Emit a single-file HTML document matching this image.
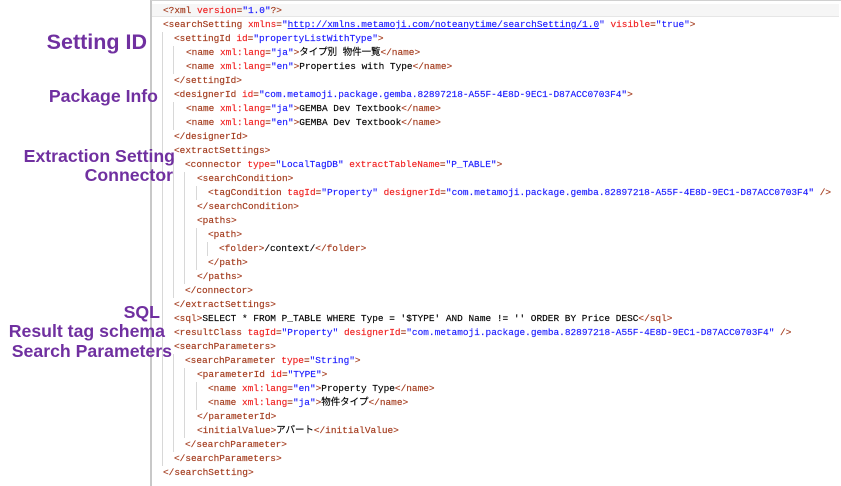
<!DOCTYPE html>
<html><head><meta charset="utf-8"><style>
html,body{margin:0;padding:0;background:#fff;width:841px;height:486px;overflow:hidden;position:relative}
.box{position:absolute;left:150px;top:0;width:689px;height:490px;border-left:2px solid #c8c8c8;border-top:1px solid #d0d0d0;border-right:1px solid #d0d0d0}
.band{position:absolute;left:152px;top:4px;width:687px;height:12px;background:#f6f6f6;border-bottom:1px solid #e6e6e6}
.ln{position:absolute;height:14px;line-height:14px;font-family:"Liberation Mono","Noto Sans CJK JP",monospace;font-size:9.45px;color:#000;white-space:pre;-webkit-text-stroke:0.15px currentColor}
.t{color:#a33a1c}.a{color:#f02020}.v{color:#1a1aff}
.u{color:#1a1aff;text-decoration:underline}
.g{position:absolute;width:1px;background:#d8d8d8}
.lab{position:absolute;font-family:"Liberation Sans",sans-serif;font-weight:bold;font-size:17.7px;color:#7030a0;text-align:right;white-space:nowrap;line-height:19px}
</style></head><body>
<div class="box"></div>
<div class="band"></div>
<div class="g" style="left:162px;top:32px;height:434px"></div>
<div class="g" style="left:173px;top:46px;height:28px"></div>
<div class="g" style="left:173px;top:102px;height:28px"></div>
<div class="g" style="left:173px;top:158px;height:140px"></div>
<div class="g" style="left:184px;top:172px;height:112px"></div>
<div class="g" style="left:196px;top:186px;height:14px"></div>
<div class="g" style="left:196px;top:228px;height:42px"></div>
<div class="g" style="left:207px;top:242px;height:14px"></div>
<div class="g" style="left:173px;top:354px;height:98px"></div>
<div class="g" style="left:184px;top:368px;height:70px"></div>
<div class="g" style="left:196px;top:382px;height:28px"></div>

<div class="ln" style="left:163px;top:4px"><span class="t">&lt;?xml </span><span class="a">version</span><span class="t">=</span><span class="v">"1.0"</span><span class="t">?&gt;</span></div>
<div class="ln" style="left:163px;top:18px"><span class="t">&lt;searchSetting </span><span class="a">xmlns</span><span class="t">=</span><span class="v">"</span><span class="u">http://xmlns.metamoji.com/noteanytime/searchSetting/1.0</span><span class="v">"</span> <span class="a">visible</span><span class="t">=</span><span class="v">"true"</span><span class="t">&gt;</span></div>
<div class="ln" style="left:174px;top:32px"><span class="t">&lt;settingId </span><span class="a">id</span><span class="t">=</span><span class="v">"propertyListWithType"</span><span class="t">&gt;</span></div>
<div class="ln" style="left:186px;top:46px"><span class="t">&lt;name </span><span class="a">xml:lang</span><span class="t">=</span><span class="v">"ja"</span><span class="t">&gt;</span>タイプ別 物件一覧<span class="t">&lt;/name&gt;</span></div>
<div class="ln" style="left:186px;top:60px"><span class="t">&lt;name </span><span class="a">xml:lang</span><span class="t">=</span><span class="v">"en"</span><span class="t">&gt;</span>Properties with Type<span class="t">&lt;/name&gt;</span></div>
<div class="ln" style="left:174px;top:74px"><span class="t">&lt;/settingId&gt;</span></div>
<div class="ln" style="left:174px;top:88px"><span class="t">&lt;designerId </span><span class="a">id</span><span class="t">=</span><span class="v">"com.metamoji.package.gemba.82897218-A55F-4E8D-9EC1-D87ACC0703F4"</span><span class="t">&gt;</span></div>
<div class="ln" style="left:186px;top:102px"><span class="t">&lt;name </span><span class="a">xml:lang</span><span class="t">=</span><span class="v">"ja"</span><span class="t">&gt;</span>GEMBA Dev Textbook<span class="t">&lt;/name&gt;</span></div>
<div class="ln" style="left:186px;top:116px"><span class="t">&lt;name </span><span class="a">xml:lang</span><span class="t">=</span><span class="v">"en"</span><span class="t">&gt;</span>GEMBA Dev Textbook<span class="t">&lt;/name&gt;</span></div>
<div class="ln" style="left:174px;top:130px"><span class="t">&lt;/designerId&gt;</span></div>
<div class="ln" style="left:174px;top:144px"><span class="t">&lt;extractSettings&gt;</span></div>
<div class="ln" style="left:185px;top:158px"><span class="t">&lt;connector </span><span class="a">type</span><span class="t">=</span><span class="v">"LocalTagDB"</span> <span class="a">extractTableName</span><span class="t">=</span><span class="v">"P_TABLE"</span><span class="t">&gt;</span></div>
<div class="ln" style="left:197px;top:172px"><span class="t">&lt;searchCondition&gt;</span></div>
<div class="ln" style="left:208px;top:186px"><span class="t">&lt;tagCondition </span><span class="a">tagId</span><span class="t">=</span><span class="v">"Property"</span> <span class="a">designerId</span><span class="t">=</span><span class="v">"com.metamoji.package.gemba.82897218-A55F-4E8D-9EC1-D87ACC0703F4"</span><span class="t"> /&gt;</span></div>
<div class="ln" style="left:197px;top:200px"><span class="t">&lt;/searchCondition&gt;</span></div>
<div class="ln" style="left:197px;top:214px"><span class="t">&lt;paths&gt;</span></div>
<div class="ln" style="left:208px;top:228px"><span class="t">&lt;path&gt;</span></div>
<div class="ln" style="left:219px;top:242px"><span class="t">&lt;folder&gt;</span>/context/<span class="t">&lt;/folder&gt;</span></div>
<div class="ln" style="left:208px;top:256px"><span class="t">&lt;/path&gt;</span></div>
<div class="ln" style="left:197px;top:270px"><span class="t">&lt;/paths&gt;</span></div>
<div class="ln" style="left:185px;top:284px"><span class="t">&lt;/connector&gt;</span></div>
<div class="ln" style="left:174px;top:298px"><span class="t">&lt;/extractSettings&gt;</span></div>
<div class="ln" style="left:174px;top:312px"><span class="t">&lt;sql&gt;</span>SELECT * FROM P_TABLE WHERE Type = '$TYPE' AND Name != '' ORDER BY Price DESC<span class="t">&lt;/sql&gt;</span></div>
<div class="ln" style="left:174px;top:326px"><span class="t">&lt;resultClass </span><span class="a">tagId</span><span class="t">=</span><span class="v">"Property"</span> <span class="a">designerId</span><span class="t">=</span><span class="v">"com.metamoji.package.gemba.82897218-A55F-4E8D-9EC1-D87ACC0703F4"</span><span class="t"> /&gt;</span></div>
<div class="ln" style="left:174px;top:340px"><span class="t">&lt;searchParameters&gt;</span></div>
<div class="ln" style="left:185px;top:354px"><span class="t">&lt;searchParameter </span><span class="a">type</span><span class="t">=</span><span class="v">"String"</span><span class="t">&gt;</span></div>
<div class="ln" style="left:197px;top:368px"><span class="t">&lt;parameterId </span><span class="a">id</span><span class="t">=</span><span class="v">"TYPE"</span><span class="t">&gt;</span></div>
<div class="ln" style="left:208px;top:382px"><span class="t">&lt;name </span><span class="a">xml:lang</span><span class="t">=</span><span class="v">"en"</span><span class="t">&gt;</span>Property Type<span class="t">&lt;/name&gt;</span></div>
<div class="ln" style="left:208px;top:396px"><span class="t">&lt;name </span><span class="a">xml:lang</span><span class="t">=</span><span class="v">"ja"</span><span class="t">&gt;</span>物件タイプ<span class="t">&lt;/name&gt;</span></div>
<div class="ln" style="left:197px;top:410px"><span class="t">&lt;/parameterId&gt;</span></div>
<div class="ln" style="left:197px;top:424px"><span class="t">&lt;initialValue&gt;</span>アパート<span class="t">&lt;/initialValue&gt;</span></div>
<div class="ln" style="left:185px;top:438px"><span class="t">&lt;/searchParameter&gt;</span></div>
<div class="ln" style="left:174px;top:452px"><span class="t">&lt;/searchParameters&gt;</span></div>
<div class="ln" style="left:163px;top:466px"><span class="t">&lt;/searchSetting&gt;</span></div>

<div class="lab" style="right:694px;top:31px;font-size:21.5px;line-height:22px">Setting ID</div>
<div class="lab" style="right:683px;top:87px">Package Info</div>
<div class="lab" style="right:666px;top:147px">Extraction Setting</div>
<div class="lab" style="right:668px;top:166px">Connector</div>
<div class="lab" style="right:681px;top:303px">SQL</div>
<div class="lab" style="right:676px;top:322px">Result tag schema</div>
<div class="lab" style="right:669px;top:342px">Search Parameters</div>
</body></html>
